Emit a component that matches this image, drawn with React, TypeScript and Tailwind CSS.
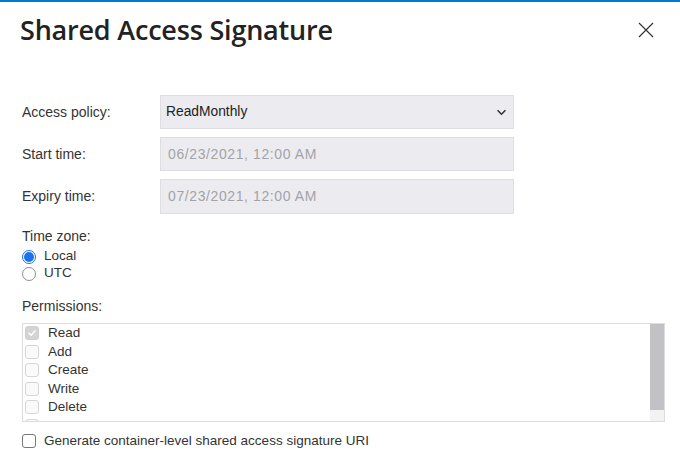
import { useState } from "react";

const permissions = ["Read", "Add", "Create", "Write", "Delete"];

function Box({ checked, disabled }: { checked?: boolean; disabled?: boolean }) {
  return (
    <span
      className={`flex h-[14px] w-[14px] shrink-0 items-center justify-center rounded-[3px] border ${
        checked && disabled ? "border-[#cfcfd2] bg-[#d4d4d7]" : "border-[#d6d6da] bg-[#fafafa]"
      }`}
    >
      {checked && (
        <svg viewBox="0 0 12 12" className="h-[10px] w-[10px]">
          <path d="M2.5 6.2 L5 8.6 L9.6 3.4" fill="none" stroke="#fff" strokeWidth="1.8" strokeLinecap="round" strokeLinejoin="round" />
        </svg>
      )}
    </span>
  );
}

function Radio({ checked }: { checked?: boolean }) {
  return (
    <span
      className={`flex h-[14px] w-[14px] shrink-0 items-center justify-center rounded-full border ${
        checked ? "border-[#1a73e8] bg-white" : "border-[#8e8e93] bg-white"
      }`}
    >
      {checked && <span className="h-[10px] w-[10px] rounded-full bg-[#1a73e8]" />}
    </span>
  );
}

export default function App() {
  const [zone, setZone] = useState("local");
  const [containerLevel, setContainerLevel] = useState(false);

  return (
    <div className="h-[469px] w-[680px] overflow-hidden border-t-2 border-[#0078d4] bg-white font-['Liberation_Sans',Arial,sans-serif] text-[14px] text-[#333]">
      <div className="flex h-[56px] items-center justify-between pl-[20px] pr-[26px]">
        <h1 className="font-['Open_Sans',sans-serif] text-[27px] font-semibold tracking-[-0.2px] text-[#222]">
          Shared Access Signature
        </h1>
        <button className="text-[#333]">
          <svg viewBox="0 0 16 16" className="h-[16px] w-[16px]">
            <path d="M1 1 L15 15 M15 1 L1 15" stroke="#333" strokeWidth="1.2" fill="none" />
          </svg>
        </button>
      </div>

      <div className="mt-[37px] px-[22px]">
        <div className="flex flex-col gap-[8px]">
          <div className="flex items-center">
            <span className="w-[138px]">Access policy:</span>
            <div className="flex h-[34px] w-[354px] items-center justify-between border border-[#dedee2] bg-[#ececf0] pl-[5px] pr-[6px] text-[13.8px] text-[#222]">
              <span>ReadMonthly</span>
              <svg viewBox="0 0 12 8" className="h-[7px] w-[11px]">
                <path d="M1.5 1.5 L6 6 L10.5 1.5" fill="none" stroke="#333" strokeWidth="1.8" />
              </svg>
            </div>
          </div>
          <div className="flex items-center">
            <span className="w-[138px]">Start time:</span>
            <div className="flex h-[34px] w-[354px] items-center border border-[#dedee2] bg-[#ececf0] pl-[7px] tracking-[0.6px] text-[#a3a3a6]">
              06/23/2021, 12:00 AM
            </div>
          </div>
          <div className="flex items-center">
            <span className="w-[138px]">Expiry time:</span>
            <div className="flex h-[35px] w-[354px] items-center border border-[#dedee2] bg-[#ececf0] pl-[7px] tracking-[0.6px] text-[#a3a3a6]">
              07/23/2021, 12:00 AM
            </div>
          </div>
        </div>

        <div className="mt-[14px] leading-[16px]">Time zone:</div>
        <div className="mt-[4px] flex flex-col">
          <label className="flex h-[17px] items-center gap-[8px]" onClick={() => setZone("local")}>
            <Radio checked={zone === "local"} />
            <span className="text-[13.5px]">Local</span>
          </label>
          <label className="flex h-[17px] items-center gap-[8px]" onClick={() => setZone("utc")}>
            <Radio checked={zone === "utc"} />
            <span className="text-[13.5px]">UTC</span>
          </label>
        </div>

        <div className="mt-[16px] leading-[16px]">Permissions:</div>
        <div className="mt-[9px] flex h-[99px] w-[643px] overflow-hidden border border-[#dcdcdf]">
          <div className="flex-1 overflow-hidden">
            {permissions.map((p, i) => (
              <div key={p} className="flex h-[18.5px] items-center gap-[9px] pl-[2px] text-[13.5px]">
                <Box checked={i === 0} disabled={i === 0} />
                <span>{p}</span>
              </div>
            ))}
            <div className="flex h-[18.5px] items-center pl-[2px]">
              <Box />
            </div>
          </div>
          <div className="flex w-[14px] flex-col bg-[#f2f2f3]">
            <div className="h-[86px] bg-[#c1c1c6]" />
          </div>
        </div>

        <label className="mt-[11px] flex h-[16px] items-center gap-[8px]" onClick={() => setContainerLevel(!containerLevel)}>
          <span className="flex h-[14px] w-[14px] items-center justify-center rounded-[3px] border border-[#77777c] bg-white">
            {containerLevel && <span className="h-[8px] w-[8px] bg-[#1a73e8]" />}
          </span>
          <span className="text-[13.5px]">Generate container-level shared access signature URI</span>
        </label>
      </div>
    </div>
  );
}
